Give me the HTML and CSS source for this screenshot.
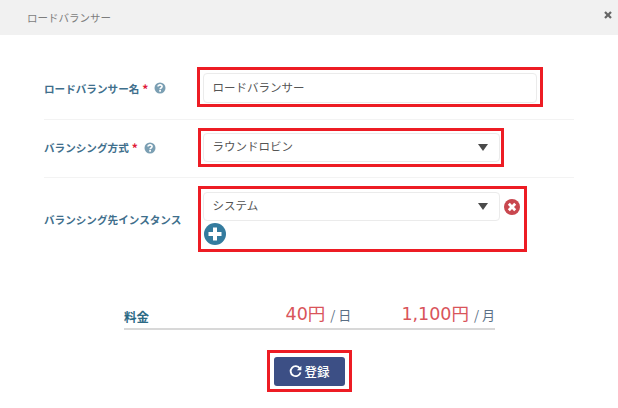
FILE: index.html
```html
<!DOCTYPE html>
<html lang="ja">
<head>
<meta charset="utf-8">
<title>ロードバランサー</title>
<link rel="stylesheet" href="styles.css">
</head>
<body>
<header class="head">
  <span class="head-title">ロードバランサー</span>
  <svg class="close" viewBox="0 0 10 10"><path d="M1.2 2.8 2.8 1.2 5 3.4 7.2 1.2 8.8 2.8 6.6 5 8.8 7.2 7.2 8.8 5 6.6 2.8 8.8 1.2 7.2 3.4 5Z"/></svg>
</header>
<main class="form">
  <div class="row row-name">
    <div class="label">ロードバランサー名<span class="req">*</span>
      <svg class="help" viewBox="0 0 12 12"><circle cx="6" cy="6" r="5.5"/><path class="help-q" d="M4 4.6C4 2.2 8.2 2.4 8.1 4.6 8.1 6 6.1 6 6.1 7.2"/><rect class="help-dot" x="5.2" y="8" width="1.8" height="1.7"/></svg>
    </div>
    <div class="mark mark-name"><div class="field">ロードバランサー</div></div>
  </div>
  <div class="row row-method">
    <div class="label">バランシング方式<span class="req">*</span>
      <svg class="help" viewBox="0 0 12 12"><circle cx="6" cy="6" r="5.5"/><path class="help-q" d="M4 4.6C4 2.2 8.2 2.4 8.1 4.6 8.1 6 6.1 6 6.1 7.2"/><rect class="help-dot" x="5.2" y="8" width="1.8" height="1.7"/></svg>
    </div>
    <div class="mark mark-method"><div class="field select">ラウンドロビン<i class="caret"></i></div></div>
  </div>
  <div class="row row-target">
    <div class="label">バランシング先インスタンス</div>
    <div class="mark mark-target">
      <div class="target-line">
        <div class="field select">システム<i class="caret"></i></div>
        <svg class="remove" viewBox="0 0 16 16"><circle cx="8" cy="8" r="8"/><path d="M3.8 5.8 5.8 3.8 8 6 10.2 3.8 12.2 5.8 10 8 12.2 10.2 10.2 12.2 8 10 5.8 12.2 3.8 10.2 6 8Z"/></svg>
      </div>
      <svg class="add" viewBox="0 0 22 22"><circle cx="11" cy="11" r="11"/><path d="M9 4.5h4V9h4.5v4H13v4.5H9V13H4.5V9H9Z"/></svg>
    </div>
  </div>
  <div class="fee">
    <span class="fee-label">料金</span>
    <div class="fee-values">
      <span class="price">40円</span><span class="unit">/ 日</span>
      <span class="price price-month">1,100円</span><span class="unit">/ 月</span>
    </div>
  </div>
  <div class="actions">
    <div class="mark mark-btn">
      <button class="btn" type="button">
        <svg class="refresh" viewBox="0 0 12 12"><path d="M10 3.2A4.6 4.6 0 1 0 10.6 6.8" /><path class="refresh-tip" d="M11.4 0.8V4.9H7.3Z"/></svg>登録
      </button>
    </div>
  </div>
</main>
</body>
</html>
```
FILE: styles.css
```css
* { box-sizing: border-box; }
html, body { margin: 0; padding: 0; }
body {
  width: 618px;
  height: 408px;
  overflow: hidden;
  background: #fff;
  font-family: "Noto Sans CJK JP", "Noto Sans", sans-serif;
  color: #444;
}
.head {
  height: 35px;
  background: #f1f1f1;
  display: flex;
  align-items: center;
  justify-content: space-between;
  padding: 0 5px 0 27px;
}
.head-title { font-size: 10.5px; color: #7d7d7d; }
.close { width: 10px; height: 10px; fill: #666; margin-bottom: 5px; }
.form { padding: 32px 44px 0; }
.row {
  display: flex;
  align-items: flex-start;
  border-bottom: 1px solid #f3f3f3;
}
.row-name { height: 53px; }
.row-method { height: 58px; padding-top: 8px; }
.row-target { height: 75px; padding-top: 8px; border-bottom: 0; }
.label {
  width: 153px;
  flex: none;
  font-size: 10.6px;
  font-weight: 700;
  color: #3f6f8c;
  display: flex;
  align-items: center;
  height: 42px;
}
.row-method .label { height: 39px; }
.row-target .label { height: 66px; }
.req { color: #e0193a; margin: 0 6px 0 3px; font-size: 12px; }
.help { width: 12px; height: 12px; }
.help circle { fill: #7b9fb3; }
.help-q { fill: none; stroke: #fff; stroke-width: 1.6; }
.help-dot { fill: #fff; }
.mark { border: 3px solid #ed1c24; flex: none; }
.mark-name { width: 346px; height: 40px; padding: 3px 3px 1px; }
.mark-method { width: 306px; height: 39px; padding: 2px; margin-left: 1px; }
.mark-target { width: 329px; height: 66px; padding: 3px 2px; margin-left: 1px; }
.field {
  height: 100%;
  border: 1.5px solid #ebebeb;
  border-radius: 4px;
  padding: 0 8.5px 2px;
  font-size: 11.5px;
  color: #555;
  display: flex;
  align-items: center;
  justify-content: space-between;
}
.select { padding-right: 11px; padding-bottom: 3px; }
.mark-target .select { width: 297px; height: 29px; flex: none; }
.mark-method .select { width: 297px; height: 29px; }
.caret {
  width: 0; height: 0;
  border-left: 5.5px solid transparent;
  border-right: 5.5px solid transparent;
  border-top: 7px solid #4a4a4a;
  margin-top: 3px;
}
.target-line { display: flex; align-items: center; gap: 4px; }
.remove { width: 16px; height: 16px; margin-top: 1px; }
.remove circle { fill: #c9474f; }
.remove path { fill: #fff; }
.add { display: block; width: 22px; height: 22px; margin: 2px 0 0 1px; }
.add circle { fill: #347b9e; }
.add path { fill: #fff; }
.fee {
  margin: 48px 79px 0 80px;
  height: 29px;
  border-bottom: 2px solid #d8d8d8;
  display: flex;
  align-items: flex-end;
  justify-content: space-between;
}
.fee-label { font-size: 12.5px; font-weight: 700; color: #2c6a85; line-height: 22px; }
.fee-values { display: flex; align-items: baseline; line-height: 26px; }
.price { font-family: "DejaVu Sans", "Noto Sans CJK JP", sans-serif; font-size: 17.5px; color: #d9545a; }
.price-month { margin-left: 50px; }
.unit { font-size: 13px; color: #5a6f85; margin-left: 5px; }
.actions { display: flex; justify-content: center; margin-top: 20px; padding-left: 1px; }
.mark-btn { width: 85px; height: 42px; padding: 4px; }
.btn {
  width: 71px;
  height: 29px;
  border: 0;
  border-radius: 3px;
  background: #3c4f85;
  color: #fff;
  font: 500 12.5px "Noto Sans CJK JP", sans-serif;
  display: flex;
  align-items: center;
  justify-content: center;
  gap: 2px;
  padding: 0;
}
.refresh { width: 13px; height: 13px; fill: none; stroke: #fff; stroke-width: 1.7; }
.refresh-tip { fill: #fff; stroke: none; }
```
